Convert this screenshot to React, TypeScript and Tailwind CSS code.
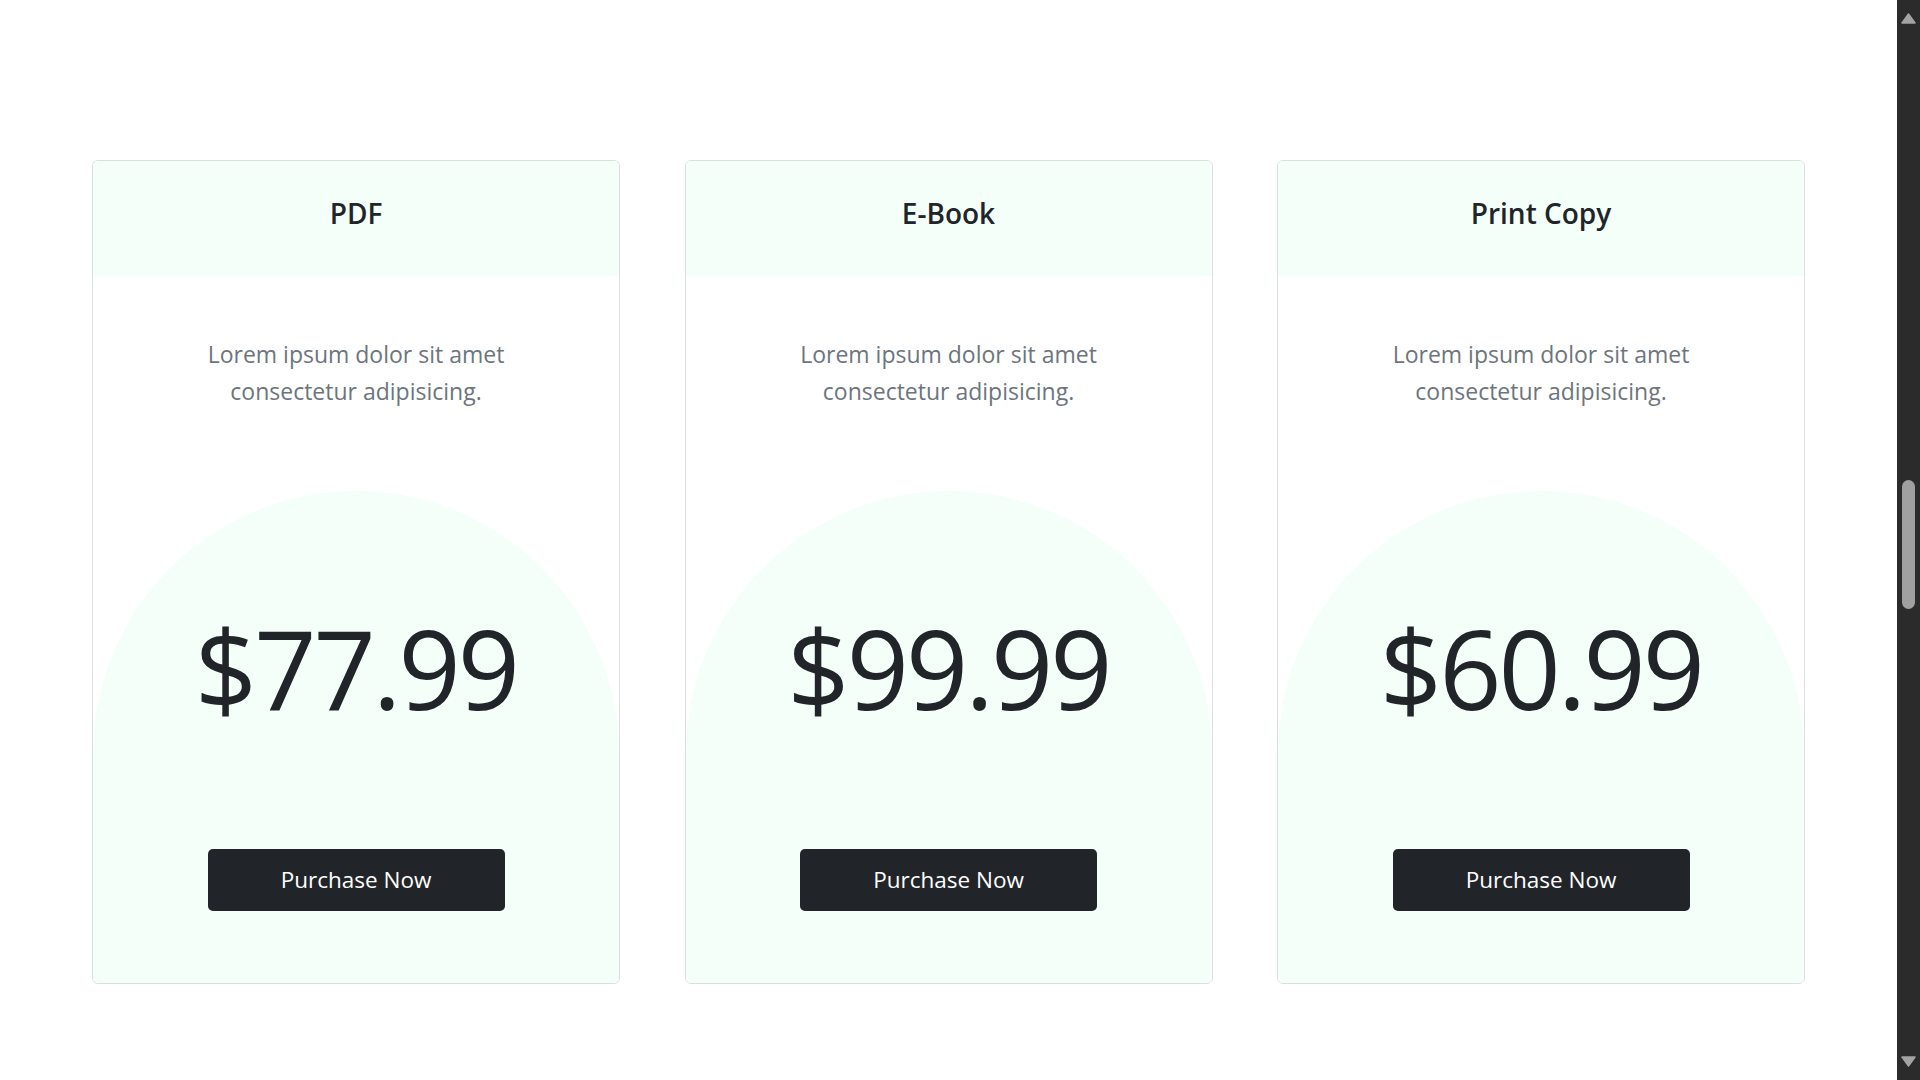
import React from 'react';

interface Plan {
  title: string;
  price: string;
}

const plans: Plan[] = [
  { title: 'PDF', price: '$77.99' },
  { title: 'E-Book', price: '$99.99' },
  { title: 'Print Copy', price: '$60.99' },
];

const PlanCard: React.FC<{ plan: Plan }> = ({ plan }) => {
  return (
    <div className="flex flex-col h-[824px] border border-[#dcdfe2] rounded-[6px] overflow-hidden bg-white">
      {/* header */}
      <div className="h-[115px] shrink-0 bg-[#f5fffa] pt-[34px] text-center">
        <h3 className="text-[28px] leading-[36px] font-semibold text-[#212529]">{plan.title}</h3>
      </div>

      {/* description */}
      <p className="mt-[60px] mx-auto max-w-[320px] text-center text-[23px] leading-[37px] text-[#6c757d]">
        Lorem ipsum dolor sit amet consectetur adipisicing.
      </p>

      {/* price area */}
      <div className="mt-[81px] flex-1 flex flex-col items-center bg-[#f5fffa] rounded-t-full">
        <div className="mt-[122px] text-[109px] leading-none tracking-[-3px] text-[#212529]">
          {plan.price}
        </div>
        <button className="mt-[127px] w-[297px] h-[62px] flex items-center justify-center rounded-[5px] bg-[#212529] text-white text-[22.5px]">
          Purchase Now
        </button>
      </div>
    </div>
  );
};

const ScrollBar: React.FC = () => (
  <aside className="w-[23px] shrink-0 h-full bg-[#2b2b2b] flex flex-col items-center">
    <svg className="mt-[13px]" width="15" height="11" viewBox="0 0 15 11">
      <path d="M7.5 1 L14 10 L1 10 Z" fill="#a3a3a3" stroke="#a3a3a3" strokeWidth="1.5" strokeLinejoin="round" />
    </svg>
    <div className="mt-[456px] w-[13px] h-[129px] rounded-full bg-[#a0a0a0]" />
    <div className="flex-1" />
    <svg className="mb-[13px]" width="15" height="11" viewBox="0 0 15 11">
      <path d="M1 1 L14 1 L7.5 10 Z" fill="#a3a3a3" stroke="#a3a3a3" strokeWidth="1.5" strokeLinejoin="round" />
    </svg>
  </aside>
);

export default function App() {
  return (
    <div className="flex h-screen w-full overflow-hidden bg-white font-['Open_Sans',sans-serif]">
      <main className="flex-1 pt-[160px] pl-[92px]">
        <div className="grid grid-cols-3 gap-[64.5px] w-[1713px]">
          {plans.map((p) => (
            <PlanCard key={p.title} plan={p} />
          ))}
        </div>
      </main>
      <ScrollBar />
    </div>
  );
}
